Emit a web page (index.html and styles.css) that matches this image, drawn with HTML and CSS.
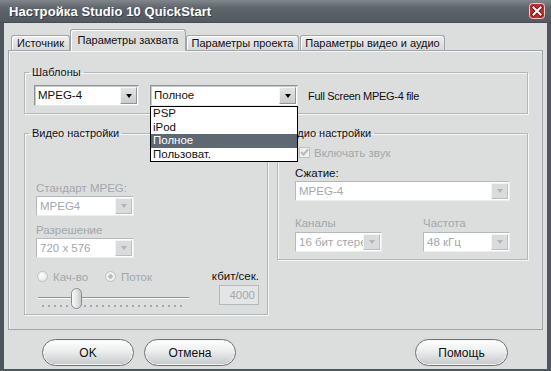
FILE: index.html
```html
<html>
<head>
    <meta charset="utf-8">
    <title>Настройка Studio 10 QuickStart</title>
    <link rel="stylesheet" href="styles.css">
</head>
<body>

<div class="window">
  <div class="titlebar">
    <span class="title">Настройка Studio 10 QuickStart</span>
    <span class="close">
      <svg width="16" height="16" viewBox="0 0 16 16">
        <rect x="0.5" y="0.5" width="15" height="15" rx="3" fill="#c42d2e" stroke="#f0c8c8"/>
        <path d="M4.5 4.5 L11.5 11.5 M11.5 4.5 L4.5 11.5" stroke="#7a1414" stroke-width="4" stroke-linecap="square"/>
        <path d="M4.5 4.5 L11.5 11.5 M11.5 4.5 L4.5 11.5" stroke="#fff" stroke-width="2" stroke-linecap="square"/>
      </svg>
    </span>
  </div>

  <div class="frame">
    <div class="tabs">
      <div class="tab tab-source">Источник</div>
      <div class="tab tab-capture active">Параметры захвата</div>
      <div class="tab tab-project">Параметры проекта</div>
      <div class="tab tab-av">Параметры видео и аудио</div>
    </div>

    <div class="panel">
      <fieldset class="group presets">
        <legend>Шаблоны</legend>
        <div class="group-body preset-row">
          <div class="combo format-combo"><span class="value">MPEG-4</span><span class="drop"></span></div>
          <div class="preset-picker">
            <div class="combo preset-combo"><span class="value">Полное</span><span class="drop"></span></div>
            <ul class="droplist">
              <li>PSP</li>
              <li>iPod</li>
              <li class="selected">Полное</li>
              <li>Пользоват.</li>
            </ul>
          </div>
          <span class="preset-desc">Full Screen MPEG-4 file</span>
        </div>
      </fieldset>

      <div class="settings">
        <fieldset class="group video">
          <legend>Видео настройки</legend>
          <div class="group-body">
            <div class="label first">Стандарт MPEG:</div>
            <div class="combo disabled video-combo"><span class="value">MPEG4</span><span class="drop"></span></div>
            <div class="label">Разрешение</div>
            <div class="combo disabled video-combo"><span class="value">720 x 576</span><span class="drop"></span></div>

            <div class="rate">
              <div class="radios">
                <span class="radio"></span><span class="muted">Кач-во</span>
                <span class="radio on"></span><span class="muted">Поток</span>
              </div>
              <div class="unit">кбит/сек.</div>
              <div class="slider"><span class="thumb"></span></div>
              <div class="edit">4000</div>
            </div>
          </div>
        </fieldset>

        <fieldset class="group audio">
          <legend>Аудио настройки</legend>
          <div class="group-body">
            <div class="check-row">
              <span class="checkbox">
                <svg width="9" height="9" viewBox="0 0 9 9"><path d="M1 4 L3.5 6.5 L8 1.5" fill="none" stroke="#b4b9bc" stroke-width="2"/></svg>
              </span>
              <span class="muted">Включать звук</span>
            </div>
            <div class="label compress">Сжатие:</div>
            <div class="combo disabled"><span class="value">MPEG-4</span><span class="drop"></span></div>
            <div class="audio-grid">
              <div class="label">Каналы</div>
              <div class="label">Частота</div>
              <div class="combo disabled"><span class="value">16 бит стере</span><span class="drop"></span></div>
              <div class="combo disabled"><span class="value">48 кГц</span><span class="drop"></span></div>
            </div>
          </div>
        </fieldset>
      </div>
    </div>

    <div class="buttons">
      <button class="btn">OK</button>
      <button class="btn">Отмена</button>
      <button class="btn help">Помощь</button>
    </div>
  </div>
</div>

</body>
</html>
```

FILE: styles.css
```css
* {
  margin: 0px;
  padding: 0px;
  box-sizing: border-box;
}
body {
  font-family: "Liberation Sans", Arial, sans-serif;
  font-size: 11px;
  color: #111;
  background: #dcdddd;
}
.window {
  width: 551px;
  height: 371px;
  display: flex;
  flex-direction: column;
}
.titlebar {
  height: 23px;
  flex: none;
  display: flex;
  align-items: center;
  padding-left: 9px;
  padding-right: 6px;
  background: linear-gradient(#81868c, #5f656c 35%, #535960);
  border-bottom: 1px solid #484d53;
}
.title {
  color: #fff;
  font-weight: bold;
  font-size: 13px;
  letter-spacing: 0.1px;
  text-shadow: 1px 1px 0 #3a3e43;
}
.close {
  margin-left: auto;
  display: flex;
}
.frame {
  flex: 1;
  background: #dcdddd;
  border: 4px solid #50565d;
  border-top: 0;
  border-bottom-width: 2px;
  padding: 6px 4px 0;
}

/* tabs */
.tabs {
  display: flex;
  align-items: flex-end;
  height: 21px;
  padding-left: 3px;
}
.tab {
  height: 15px;
  line-height: 14px;
  text-align: center;
  border: 1px solid #9ea6ab;
  border-bottom: 0;
  border-radius: 3px 3px 0 0;
  background: linear-gradient(#eeefef, #d5d7d8);
  box-shadow: inset 1px 1px 0 #fff;
}
.tab-source { width: 59px; }
.tab-capture { width: 116px; }
.tab-project { width: 113px; }
.tab-av { width: 145px; margin-left: 1px; }
.tab.active {
  height: 22px;
  line-height: 20px;
  margin-bottom: -1px;
  background: #dcdddd;
  position: relative;
  z-index: 1;
}
.panel {
  height: 280px;
  border: 1px solid #9fa7ac;
  box-shadow: inset 1px 1px 0 #f3f4f4;
  padding: 14px 14px 0 15px;
}

/* group boxes */
.group {
  border: 1px solid #b1b7bb;
  box-shadow: inset 1px 1px 0 #f5f6f6, 1px 1px 0 #f5f6f6;
}
.group legend {
  margin-left: 4px;
  padding: 0 3px;
  line-height: 14px;
  font-size: 11px;
}
.presets .group-body {
  padding: 6px 9px 7px;
}
.preset-row {
  display: flex;
  align-items: center;
}
.format-combo { width: 105px; }
.preset-picker {
  position: relative;
  margin-left: 11px;
}
.preset-combo { width: 148px; }
.preset-desc {
  margin-left: 10px;
  letter-spacing: -0.3px;
}
.droplist {
  position: absolute;
  top: 21px;
  left: 0;
  width: 148px;
  list-style: none;
  background: #fff;
  border: 1px solid #000;
  z-index: 5;
}
.droplist li {
  height: 13.5px;
  line-height: 13px;
  padding-left: 2px;
  font-size: 11.5px;
}
.droplist li.selected {
  background: #5e6873;
  color: #fff;
}

/* combo boxes */
.combo {
  display: flex;
  height: 21px;
  background: #fff;
  border: 1px solid;
  border-color: #8d9397 #e4e6e7 #e4e6e7 #8d9397;
  box-shadow: inset 1px 1px 0 #c5c9cb;
}
.combo .value {
  flex: 1;
  padding-left: 3px;
  line-height: 19px;
  white-space: nowrap;
  overflow: hidden;
  font-size: 11.5px;
}
.combo .drop {
  width: 17px;
  margin: 1px 1px 1px 0;
  display: flex;
  align-items: center;
  justify-content: center;
  background: linear-gradient(#e2e4e5, #c9cccd);
  border: 1px solid;
  border-color: #f7f7f7 #8f9599 #8f9599 #f7f7f7;
}
.combo .drop::after {
  content: "";
  border-top: 4px solid #000;
  border-left: 3.5px solid transparent;
  border-right: 3.5px solid transparent;
}
.combo.disabled {
  height: 20px;
  border-color: #b4b9bc #eceded #eceded #b4b9bc;
  box-shadow: none;
}
.combo.disabled .value {
  color: #a3a8ab;
  line-height: 18px;
}
.combo.disabled .drop {
  background: #d9dbdc;
  border-color: #f2f3f3 #b9bec1 #b9bec1 #f2f3f3;
}
.combo.disabled .drop::after {
  border-top-color: #b0b5b8;
}
.muted, .label {
  color: #a3a8ab;
}

/* video / audio */
.settings {
  display: grid;
  grid-template-columns: 244px 251px;
  column-gap: 9px;
  align-items: start;
  margin-top: 12px;
}
.video .group-body {
  padding: 0 8px 5px 11px;
}
.label {
  line-height: 14px;
  font-size: 11.5px;
}
.video .label.first {
  margin-top: 41px;
}
.video .label {
  margin-top: 7px;
}
.video-combo {
  width: 98px;
  margin-top: 1px;
}
.rate {
  display: grid;
  grid-template-columns: 1fr auto;
  margin-top: 11px;
}
.radios {
  display: flex;
  align-items: center;
  height: 15px;
  font-size: 11.5px;
}
.radio {
  width: 11px;
  height: 11px;
  border-radius: 50%;
  border: 1px solid #bcc1c4;
  background: radial-gradient(circle at 40% 35%, #fdfdfd, #e0e2e3);
  margin: 0 5px 0 1px;
}
.radios .radio.on {
  margin-left: 17px;
  background: radial-gradient(circle, #b9bec1 0 2px, #f6f6f6 2.5px, #e0e2e3);
}
.unit {
  text-align: right;
  line-height: 15px;
  font-size: 11.5px;
}
.slider {
  width: 151px;
  height: 21px;
  margin: 4px 0 0 2px;
  background:
    linear-gradient(#8e9498, #8e9498) 0 9px / 100% 1px no-repeat,
    linear-gradient(#fafafa, #fafafa) 0 10px / 100% 1px no-repeat,
    repeating-linear-gradient(to right, #a3a8ab 0 2px, transparent 2px 6px) 4px 17px / 144px 2px no-repeat;
}
.thumb {
  display: block;
  width: 11px;
  height: 21px;
  margin-left: 33px;
  border: 1px solid #868d91;
  border-radius: 6px;
  background: linear-gradient(to right, #fafafa, #dfe1e2 60%, #c4c8ca);
}
.edit {
  justify-self: end;
  width: 40px;
  height: 20px;
  margin-top: 1px;
  border: 1px solid #b4b9bc;
  background: #e4e5e6;
  color: #a3a8ab;
  text-align: right;
  padding-right: 3px;
  line-height: 18px;
  font-size: 11.5px;
}
.audio .group-body {
  padding: 0 17px 7px;
}
.check-row {
  display: flex;
  align-items: center;
  height: 13px;
  margin-top: 6px;
  padding-left: 4px;
  font-size: 11.5px;
}
.checkbox {
  width: 11px;
  height: 11px;
  border: 1px solid #bcc1c4;
  background: #eeefef;
  margin-right: 4px;
  display: flex;
  align-items: center;
  justify-content: center;
}
.audio .label.compress {
  color: #111;
  margin-top: 7px;
  margin-bottom: 1px;
}
.audio-grid {
  display: grid;
  grid-template-columns: 87px 87px;
  column-gap: 41px;
  margin-top: 15px;
}
.audio-grid .combo {
  margin-top: 2px;
}

/* buttons */
.buttons {
  display: flex;
  gap: 10px;
  padding: 9px 35px 0 34px;
}
.btn {
  width: 92px;
  height: 27px;
  font-family: "Liberation Sans", Arial, sans-serif;
  font-size: 12px;
  color: #111;
  border: 1px solid #6d7479;
  border-radius: 14px;
  background: linear-gradient(#ffffff, #eceded 45%, #d3d6d7 80%, #c4c8ca);
  box-shadow: inset 0 0 0 1px #f4f5f5;
}
.btn.help {
  margin-left: auto;
  width: 93px;
}
```
